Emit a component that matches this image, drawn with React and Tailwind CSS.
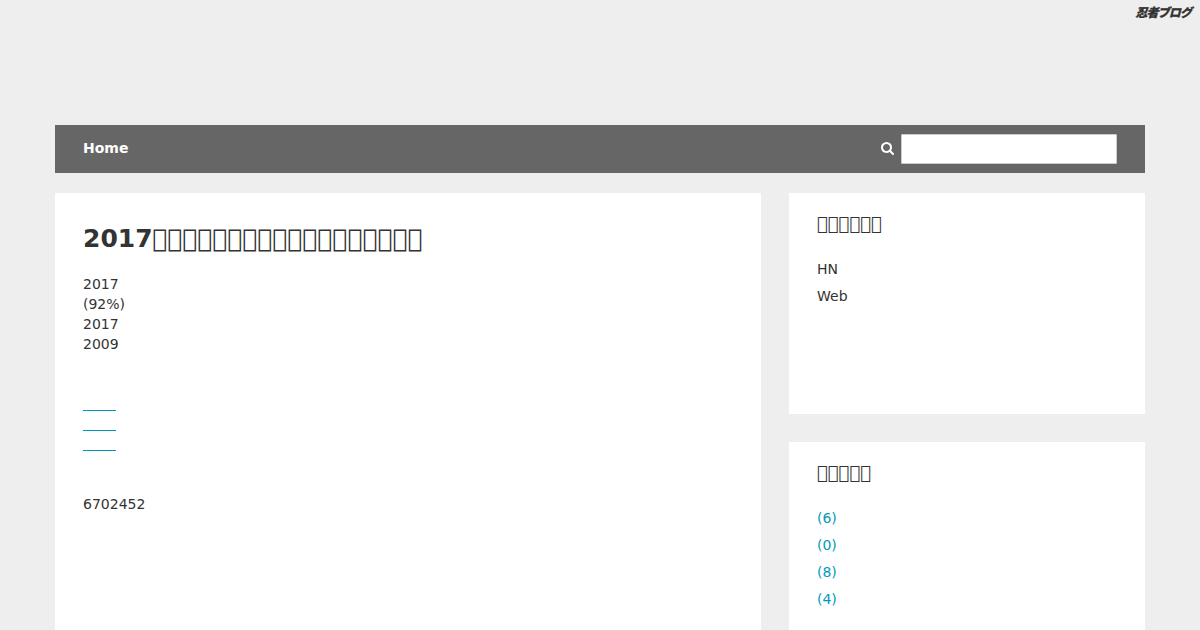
const App = () => {
  const box = (n) => '\uE000'.repeat(n);

  return (
    <div className="h-screen overflow-hidden bg-[#eeeeee] font-['DejaVu_Sans',sans-serif] text-sm text-[#333333]">
      {/* Blog service logo */}
      <div className="flex h-[125px] justify-end pt-1 pr-[9px]">
        <span className="h-4 font-['Noto_Sans_CJK_JP',sans-serif] text-xs leading-4 font-black tracking-[-0.9px] text-[#333333] italic [-webkit-text-stroke:0.3px_#333333]">
          忍者ブログ
        </span>
      </div>

      <div className="mx-[55px]">
        {/* Nav */}
        <nav className="flex h-12 items-center justify-between bg-[#666666] px-7">
          <a className="mb-0.5 font-bold text-white">Home</a>
          <div className="flex items-center gap-[7px]">
            <svg viewBox="64 128 1664 1664" className="mb-px h-[13px] w-[13px] fill-white">
              <path d="M1216 832q0-185-131.5-316.5t-316.5-131.5-316.5 131.5-131.5 316.5 131.5 316.5 316.5 131.5 316.5-131.5 131.5-316.5zm512 832q0 52-38 90t-90 38q-54 0-90-38l-343-342q-179 124-399 124-143 0-273.5-55.5t-225-150-150-225-55.5-273.5 55.5-273.5 150-225 225-150 273.5-55.5 273.5 55.5 225 150 150 225 55.5 273.5q0 220-124 399l343 343q37 37 37 90z" />
            </svg>
            <input className="h-[30px] w-[216px] rounded-[1px] border border-[#cccccc] bg-white" />
          </div>
        </nav>

        <div className="mt-5 flex items-start justify-between">
          {/* Main article */}
          <main className="h-[500px] w-[706px] bg-white px-7 pt-7">
            <h1 className="text-[25px] leading-[36px] font-bold">2017{box(18)}</h1>
            <p className="mt-[17px] leading-5">
              2017
              <br />
              (92%)
              <br />
              2017
              <br />
              2009
            </p>
            <div className="mt-14 flex flex-col gap-[19px]">
              <a className="h-px w-[33px] bg-[#0099bb]" />
              <a className="h-px w-[33px] bg-[#0099bb]" />
              <a className="h-px w-[33px] bg-[#0099bb]" />
            </div>
            <p className="mt-[43px] leading-5">6702452</p>
          </main>

          {/* Sidebar */}
          <aside className="flex w-[356px] flex-col gap-7">
            <section className="h-[221px] bg-white px-7 pt-[18px]">
              <h2 className="text-lg leading-[26px]">{box(6)}</h2>
              <ul className="mt-[19px] leading-[27px]">
                <li>HN</li>
                <li>Web</li>
              </ul>
            </section>
            <section className="h-[300px] bg-white px-7 pt-[18px]">
              <h2 className="text-lg leading-[26px]">{box(5)}</h2>
              <ul className="mt-[19px] leading-[27px] text-[#0099bb]">
                <li>(6)</li>
                <li>(0)</li>
                <li>(8)</li>
                <li>(4)</li>
              </ul>
            </section>
          </aside>
        </div>
      </div>
    </div>
  );
};

export default App;
